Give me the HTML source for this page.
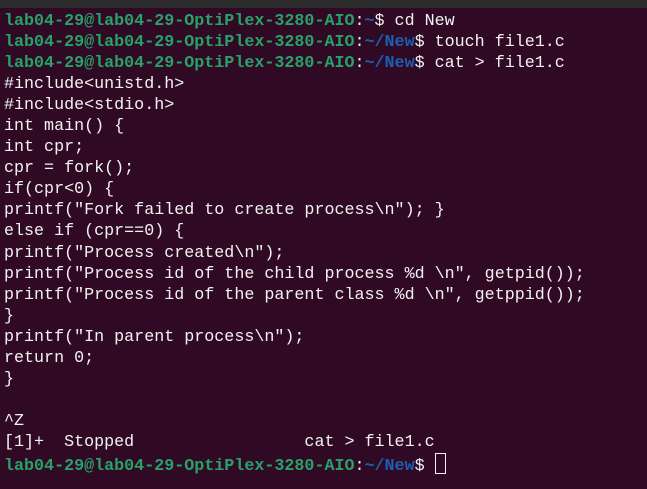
<!DOCTYPE html>
<html><head><style>
html,body{margin:0;padding:0;}
body{width:647px;height:489px;background:#300a24;overflow:hidden;position:relative;}
.top{position:absolute;left:0;top:0;width:647px;height:8px;background:#2c2c2c;}
pre{position:absolute;left:4px;top:11px;margin:0;font-family:"Liberation Mono",monospace;font-size:16.7px;line-height:21.05px;color:#f2f2f2;}
.g{color:#26a269;font-weight:bold;}
.b{color:#1a5fb4;font-weight:bold;}
.cur{display:inline-block;width:9px;height:19px;border:1px solid #f2f2f2;vertical-align:-4px;}
</style></head><body>
<div class="top"></div>
<pre><span class="g">lab04-29@lab04-29-OptiPlex-3280-AIO</span>:<span class="b">~</span>$ cd New
<span class="g">lab04-29@lab04-29-OptiPlex-3280-AIO</span>:<span class="b">~/New</span>$ touch file1.c
<span class="g">lab04-29@lab04-29-OptiPlex-3280-AIO</span>:<span class="b">~/New</span>$ cat &gt; file1.c
#include&lt;unistd.h&gt;
#include&lt;stdio.h&gt;
int main() {
int cpr;
cpr = fork();
if(cpr&lt;0) {
printf("Fork failed to create process\n"); }
else if (cpr==0) {
printf("Process created\n");
printf("Process id of the child process %d \n", getpid());
printf("Process id of the parent class %d \n", getppid());
}
printf("In parent process\n");
return 0;
}

^Z
[1]+  Stopped                 cat &gt; file1.c
<span class="g">lab04-29@lab04-29-OptiPlex-3280-AIO</span>:<span class="b">~/New</span>$ <span class="cur"></span></pre>
</body></html>
